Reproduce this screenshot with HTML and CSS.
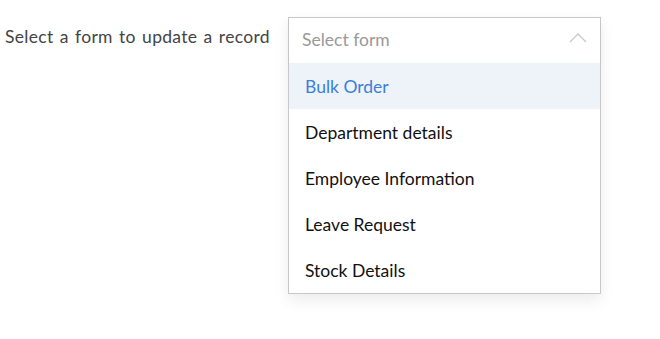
FILE: index.html
```html
<!DOCTYPE html>
<html lang="en">
<head>
  <meta charset="UTF-8" />
  <title>Update a record</title>
  <link rel="stylesheet" href="styles.css">
</head>
<body>
  <div class="form-row">
    <label class="form-label">Select a form to update a record</label>

    <!-- ========== FORM PICKER (open) ========== -->
    <div class="picker">
      <div class="picker-head">
        <span class="picker-placeholder">Select form</span>
        <svg class="chevron" width="18" height="11" viewBox="0 0 18 11">
          <path d="M1 10 L9 2 L17 10" fill="none" stroke="#c4c8d0" stroke-width="1.3" />
        </svg>
      </div>
      <ul class="picker-list">
        <li class="picker-item active">Bulk Order</li>
        <li class="picker-item">Department details</li>
        <li class="picker-item">Employee Information</li>
        <li class="picker-item">Leave Request</li>
        <li class="picker-item">Stock Details</li>
      </ul>
    </div>
  </div>
</body>
</html>
```

FILE: styles.css
```css
* {
  margin: 0;
  padding: 0;
  box-sizing: border-box;
}

body {
  font-family: 'Lato', 'Open Sans', sans-serif;
  background: #fff;
  width: 660px;
  height: 339px;
  overflow: hidden;
}

.form-row {
  display: flex;
  align-items: flex-start;
  padding: 17px 0 0 5px;
}

.form-label {
  width: 283px;
  padding-top: 9px;
  font-size: 17.5px;
  letter-spacing: 0.3px;
  word-spacing: 1.5px;
  color: #444;
  white-space: nowrap;
}

/* ========== PICKER ========== */
.picker {
  width: 313px;
  border: 1px solid #c8c8cc;
  background: #fff;
  box-shadow: 0 6px 14px rgba(0, 0, 0, 0.08);
}

.picker-head {
  height: 45px;
  display: flex;
  align-items: center;
  justify-content: space-between;
  padding: 0 13px 0 13px;
  box-shadow: 0 3px 5px rgba(0, 0, 0, 0.03);
}

.picker-placeholder {
  font-size: 17.5px;
  color: #999;
  margin-top: -2px;
}

.chevron {
  margin-top: -6px;
}

.picker-list {
  list-style: none;
}

.picker-item {
  height: 46px;
  display: flex;
  align-items: center;
  padding-left: 16px;
  font-size: 17.5px;
  color: #111;
}

.picker-item.active {
  background: #eef3fa;
  color: #3d7fd6;
}
```
